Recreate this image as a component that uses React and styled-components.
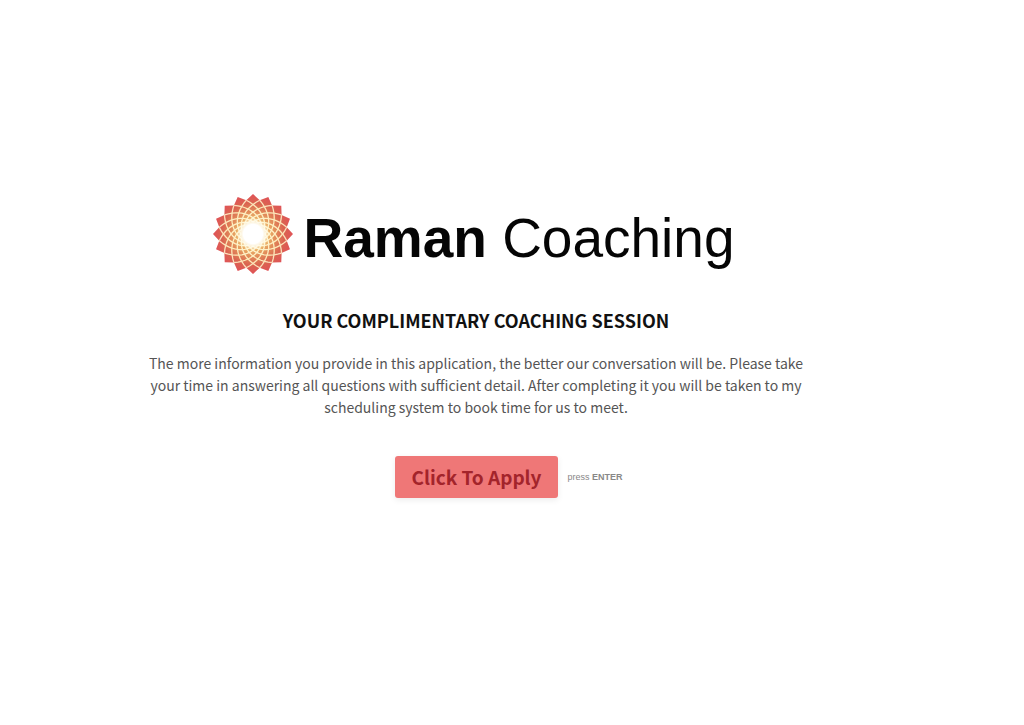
import React from 'react';
import styled, { createGlobalStyle } from 'styled-components';

const GlobalStyle = createGlobalStyle`
  * {
    box-sizing: border-box;
  }

  body {
    margin: 0;
    background: #fff;
    font-family: 'Noto Sans CJK SC', 'Noto Sans', sans-serif;
  }
`;

const Page = styled.main`
  min-height: 100vh;
  padding: 192px 72px 40px 0;
`;

const Welcome = styled.section`
  display: flex;
  flex-direction: column;
  align-items: center;
  max-width: 680px;
  margin: 0 auto;
  text-align: center;
`;

const Brand = styled.header`
  display: flex;
  align-items: center;
  gap: 8px;
  padding-right: 6px;
`;

const Mark = styled.svg`
  width: 84px;
  height: 84px;
  flex-shrink: 0;
`;

const BrandName = styled.h1`
  margin: 0;
  padding-top: 8px;
  color: #050505;
  font-family: 'Liberation Sans', Arial, sans-serif;
  font-size: 55px;
  font-weight: 400;
  line-height: 64px;
  white-space: nowrap;
`;

const Title = styled.h2`
  margin: 32px 0 0;
  color: #111;
  font-size: 18px;
  font-weight: 700;
  line-height: 24px;
`;

const Description = styled.p`
  margin: 20px 0 0;
  color: #555;
  font-size: 14px;
  line-height: 22px;
`;

const Actions = styled.div`
  display: flex;
  align-items: center;
  gap: 10px;
  margin-top: 38px;
  padding-left: 66px;
`;

const ApplyButton = styled.button`
  height: 42px;
  padding: 0 16px;
  border: none;
  border-radius: 3px;
  background: #ef7777;
  box-shadow: 0 2px 6px rgba(0, 0, 0, 0.08);
  color: #a3242b;
  font-family: inherit;
  font-size: 19px;
  font-weight: 700;
  line-height: 40px;
  cursor: pointer;

  &:hover {
    background: #f28787;
  }
`;

const Hint = styled.span`
  color: #888;
  font-family: 'Liberation Sans', Arial, sans-serif;
  font-size: 9px;
  line-height: 12px;
`;

const PETALS = 16;
const OUTER = 40;
const SHRINK = 0.86;

const point = (radius, step) => {
  const angle = (step * Math.PI) / PETALS - Math.PI / 2;
  return `${(radius * Math.cos(angle)).toFixed(2)} ${(radius * Math.sin(angle)).toFixed(2)}`;
};

// one arm of the lattice, winding inwards from a petal tip
const spiral = (petal, direction) => {
  const points = [];
  for (let step = 1; step <= 8; step += 0.5) {
    points.push(point(OUTER * SHRINK ** step, petal * 2 + direction * step));
  }
  return `M${points.join('L')}`;
};

const petals = Array.from({ length: PETALS }, (_, i) => i);

const outline = `M${petals
  .map((i) => `${point(OUTER, i * 2)}L${point(OUTER * SHRINK, i * 2 + 1)}`)
  .join('L')}Z`;

const LotusMark = () => (
  <Mark viewBox="-42 -42 84 84" aria-hidden="true">
    <defs>
      <radialGradient id="petalFill" gradientUnits="userSpaceOnUse" cx="0" cy="0" r="40">
        <stop offset="0.3" stopColor="#f8dfa0" />
        <stop offset="0.42" stopColor="#e8ab64" />
        <stop offset="0.6" stopColor="#e08458" />
        <stop offset="0.78" stopColor="#da6450" />
        <stop offset="1" stopColor="#e05258" />
      </radialGradient>
      <radialGradient id="latticeLine" gradientUnits="userSpaceOnUse" cx="0" cy="0" r="40">
        <stop offset="0.35" stopColor="#fff6d2" />
        <stop offset="0.65" stopColor="#fdebb8" />
        <stop offset="0.86" stopColor="#fbdcba" />
      </radialGradient>
      <radialGradient id="centerGlow" gradientUnits="userSpaceOnUse" cx="0" cy="0" r="16">
        <stop offset="0.6" stopColor="#fff" />
        <stop offset="1" stopColor="#fff" stopOpacity="0" />
      </radialGradient>
    </defs>
    <path d={outline} fill="url(#petalFill)" />
    <g fill="none" stroke="url(#latticeLine)" strokeWidth="1.3">
      {petals.map((i) => (
        <React.Fragment key={i}>
          <path d={spiral(i, 1)} />
          <path d={spiral(i, -1)} />
        </React.Fragment>
      ))}
    </g>
    <circle r="16" fill="url(#centerGlow)" />
  </Mark>
);

const App = () => {
  return (
    <>
      <GlobalStyle />
      <Page>
        <Welcome>
          <Brand>
            <LotusMark />
            <BrandName>
              <strong>Raman</strong> Coaching
            </BrandName>
          </Brand>

          <Title>YOUR COMPLIMENTARY COACHING SESSION</Title>

          <Description>
            The more information you provide in this application, the better our
            conversation will be. Please take your time in answering all questions
            with sufficient detail. After completing it you will be taken to my
            scheduling system to book time for us to meet.
          </Description>

          <Actions>
            <ApplyButton type="button">Click To Apply</ApplyButton>
            <Hint>
              press <strong>ENTER</strong>
            </Hint>
          </Actions>
        </Welcome>
      </Page>
    </>
  );
};

export default App;
